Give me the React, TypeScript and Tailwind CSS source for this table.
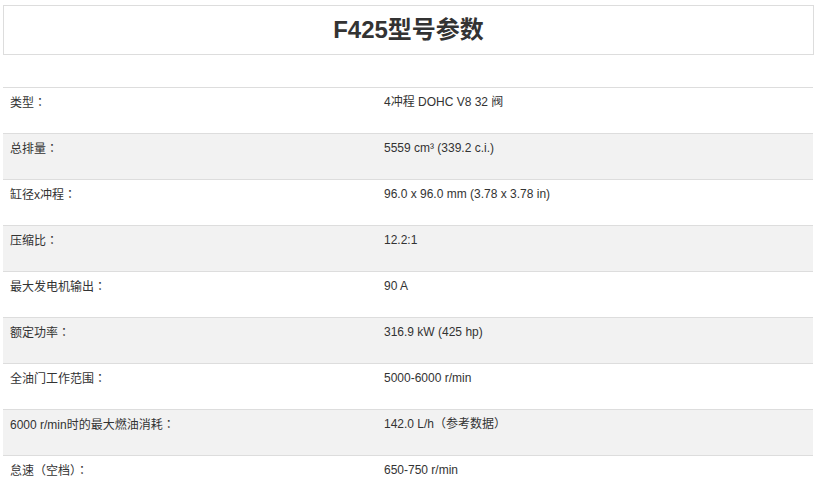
const rows: [string, string][] = [
  ["类型", "4冲程 DOHC V8 32 阀"],
  ["总排量", "5559 cm³ (339.2 c.i.)"],
  ["缸径x冲程", "96.0 x 96.0 mm (3.78 x 3.78 in)"],
  ["压缩比", "12.2:1"],
  ["最大发电机输出", "90 A"],
  ["额定功率", "316.9 kW (425 hp)"],
  ["全油门工作范围", "5000-6000 r/min"],
  ["6000 r/min时的最大燃油消耗", "142.0 L/h（参考数据）"],
  ["怠速（空档）", "650-750 r/min"],
];

export default function App() {
  return (
    <div
      className="min-h-[490px] bg-white px-[3px] pt-[5px] text-[#333]"
      style={{ fontFamily: '"Liberation Sans", "Noto Sans CJK SC", sans-serif' }}
    >
      <div className="flex h-[50px] items-center justify-center border border-[#ddd]">
        <h1 className="text-[24px] font-bold leading-none text-[#333]">F425型号参数</h1>
      </div>
      <div className="mt-[32px] w-[810px]">
        {rows.map(([label, value], i) => (
          <div
            key={label}
            className={`flex h-[46px] border-t border-[#ddd] text-[12px] leading-[18px] ${
              i % 2 === 1 ? "bg-[#f2f2f2]" : "bg-white"
            }`}
          >
            <div className="w-[374px] shrink-0 pl-[7px] pt-[5px]">
              {label}
              <span className="font-['Noto_Sans_CJK_TC',sans-serif]">：</span>
            </div>
            <div className="flex-1 pl-[7px] pt-[5px]">{value}</div>
          </div>
        ))}
      </div>
    </div>
  );
}
